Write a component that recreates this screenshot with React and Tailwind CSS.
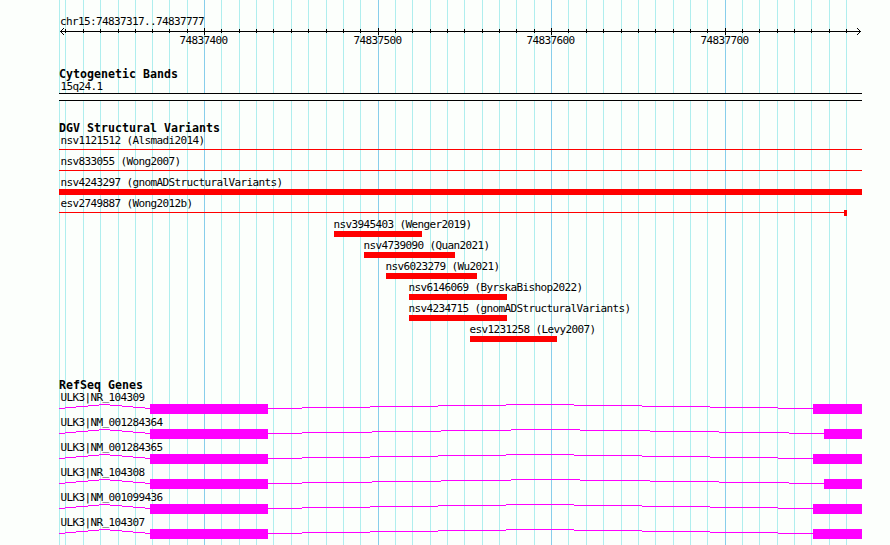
const MINOR = [
  59, 65, 83, 100, 118, 135, 152, 169, 187, 221, 239, 256, 273, 291, 308, 326, 343, 360,
  395, 412, 430, 447, 464, 482, 499, 516, 534, 568, 586, 603, 621, 638, 655, 673, 690, 707,
  742, 759, 777, 794, 811, 829, 846,
];
const MAJOR = [204, 378, 551, 725];

const VARIANTS = [
  { label: 'nsv1121512 (Alsmadi2014)', start: 59, end: 862, thin: true },
  { label: 'nsv833055 (Wong2007)', start: 59, end: 862, thin: true },
  { label: 'nsv4243297 (gnomADStructuralVariants)', start: 59, end: 862 },
  { label: 'esv2749887 (Wong2012b)', start: 59, end: 847, thin: true, cap: true },
  { label: 'nsv3945403 (Wenger2019)', start: 334, end: 422 },
  { label: 'nsv4739090 (Quan2021)', start: 364, end: 455 },
  { label: 'nsv6023279 (Wu2021)', start: 386, end: 477 },
  { label: 'nsv6146069 (ByrskaBishop2022)', start: 409, end: 507 },
  { label: 'nsv4234715 (gnomADStructuralVariants)', start: 409, end: 507 },
  { label: 'esv1231258 (Levy2007)', start: 470, end: 557 },
];

const INTRON_LEFT = [59, 65, 76, 88, 99, 110, 122, 133, 145, 150];
const INTRON_LONG = [268, 302, 370, 438, 506, 574, 642, 710, 778, 813];
const INTRON_LONGER = [268, 302, 372, 441, 511, 580, 650, 719, 789, 824];

const GENES = [
  { label: 'ULK3|NR_104309', intron: INTRON_LONG },
  { label: 'ULK3|NM_001284364', intron: INTRON_LONGER },
  { label: 'ULK3|NM_001284365', intron: INTRON_LONG },
  { label: 'ULK3|NR_104308', intron: INTRON_LONGER },
  { label: 'ULK3|NM_001099436', intron: INTRON_LONG },
  { label: 'ULK3|NR_104307', intron: INTRON_LONG },
];

// Heights of the nine steps of an intron arch, measured from its peak.
const STEPS = [4, 3, 2, 1, 0, 1, 2, 3, 4];

function Grid() {
  return (
    <svg className="absolute inset-0" width="890" height="545" shapeRendering="crispEdges">
      {MINOR.map((x) => (
        <rect key={x} x={x} y="0" width="1" height="545" fill="#afeeee" />
      ))}
      {MAJOR.map((x) => (
        <rect key={x} x={x} y="0" width="1" height="545" fill="#87ceeb" />
      ))}
    </svg>
  );
}

function Label({ children, x = 60 }) {
  return (
    <div
      className="h-[13px] text-[11px] leading-[13px] tracking-[-0.622px] whitespace-pre"
      style={{ marginLeft: x }}
    >
      {children}
    </div>
  );
}

function Heading({ children }) {
  return (
    <h2 className="ml-[59px] h-[12px] text-[11.6px] leading-[12px] font-bold tracking-[0.016px] whitespace-pre">
      {children}
    </h2>
  );
}

function Ruler() {
  return (
    <header className="pt-[15px]">
      <Label>chr15:74837317..74837777</Label>
      <svg className="block" width="890" height="7" shapeRendering="crispEdges">
        <rect x="60" y="3" width="801" height="1" />
        {MINOR.slice(1).map((x) => (
          <rect key={x} x={x} y="1" width="1" height="4" />
        ))}
        {MAJOR.map((x) => (
          <rect key={x} x={x} y="0" width="1" height="7" />
        ))}
        {[1, 2, 3].map((d) => (
          <g key={d}>
            <rect x={60 + d} y={3 - d} width="1" height="1" />
            <rect x={60 + d} y={3 + d} width="1" height="1" />
            <rect x={860 - d} y={3 - d} width="1" height="1" />
            <rect x={860 - d} y={3 + d} width="1" height="1" />
          </g>
        ))}
      </svg>
      <div className="-mt-px flex pl-[179.5px]">
        <div className="w-[174px]"><Label x={0}>74837400</Label></div>
        <div className="w-[173px]"><Label x={0}>74837500</Label></div>
        <div className="w-[174px]"><Label x={0}>74837600</Label></div>
        <div><Label x={0}>74837700</Label></div>
      </div>
    </header>
  );
}

function Variant({ item }) {
  return (
    <div className="h-[21px]">
      <Label x={Math.max(60.5, item.start - 0.5)}>{item.label}</Label>
      <div
        className="flex h-[6px] items-center"
        style={{ marginLeft: item.start, width: item.end - item.start }}
      >
        <div className={item.thin ? 'mb-px h-px grow bg-[#ff0000]' : 'h-[6px] grow bg-[#ff0000]'} />
        {item.cap && <div className="h-[6px] w-[3px] bg-[#ff0000]" />}
      </div>
    </div>
  );
}

function Arch({ xs }) {
  return STEPS.map((y, i) => (
    <rect key={i} x={xs[i]} y={y} width={xs[i + 1] - xs[i]} height="1" />
  ));
}

function Gene({ item }) {
  const exon = item.intron[9];
  const [prefix, id] = item.label.split('_');
  return (
    <div className="h-[25px]">
      <Label x={60.5}>
        {prefix}
        <span className="align-[1px] leading-[0]">_</span>
        {id}
      </Label>
      <svg className="block" width="890" height="10" fill="#ff00ff" shapeRendering="crispEdges">
        <Arch xs={INTRON_LEFT} />
        <rect x="150" y="0" width="118" height="10" />
        <Arch xs={item.intron} />
        <rect x={exon} y="0" width={862 - exon} height="10" />
      </svg>
    </div>
  );
}

export default function App() {
  return (
    <main className="relative h-[545px] w-[890px] overflow-hidden bg-[#fcfffc] font-['DejaVu_Sans_Mono',monospace] text-black">
      <Grid />
      <div className="relative">
        <Ruler />
        <section className="mt-[21px]">
          <Heading>Cytogenetic Bands</Heading>
          <Label x={60.5}>15q24.1</Label>
          <div className="ml-[59px] h-[8px] w-[803px] border-y border-black bg-[#fcfffc]" />
        </section>
        <section className="mt-[21px]">
          <Heading>DGV Structural Variants</Heading>
          {VARIANTS.map((v) => (
            <Variant key={v.label} item={v} />
          ))}
        </section>
        <section className="mt-[35px]">
          <Heading>RefSeq Genes</Heading>
          {GENES.map((g) => (
            <Gene key={g.label} item={g} />
          ))}
        </section>
      </div>
    </main>
  );
}
